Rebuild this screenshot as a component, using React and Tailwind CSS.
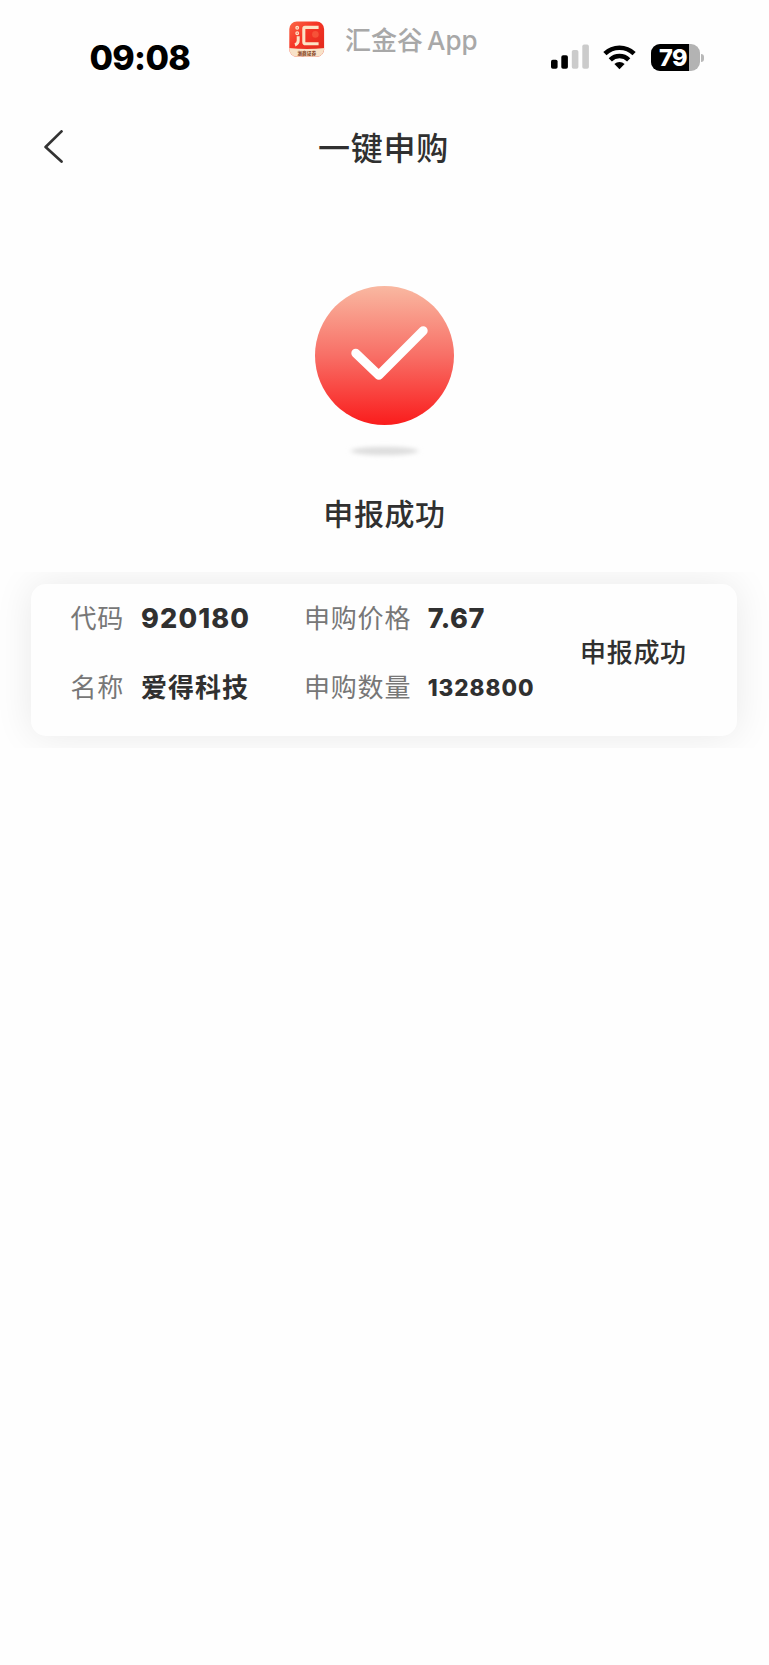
import React from 'react';

const AppLogo = () => (
    <svg className="w-9 h-9 shrink-0" viewBox="0 0 36 36">
        <defs>
            <linearGradient id="logoRed" x1="0" y1="0" x2="1" y2="1">
                <stop offset="0" stopColor="#fb6a48" />
                <stop offset="0.4" stopColor="#f63626" />
                <stop offset="1" stopColor="#dc261b" />
            </linearGradient>
            <clipPath id="logoClip">
                <rect x="0.3" y="0.6" width="34.8" height="35.2" rx="7.5" />
            </clipPath>
        </defs>
        <g clipPath="url(#logoClip)">
            <rect width="36" height="36" fill="url(#logoRed)" />
            <path d="M0 27 Q18 29 36 27 V36 H0 Z" fill="#f8e2c8" />
            <circle cx="26.4" cy="13.4" r="3.3" fill="#f65238" />
            <g fill="none" stroke="#fce3c6">
                <path d="M29.6 6.4 H16 Q14.8 6.4 14.8 7.8 V21 Q14.8 22.8 16.6 22.8 H29.6" strokeWidth="3.1" />
                <path d="M9.2 15.2 V19.6 Q9.2 22.8 6 24" strokeWidth="3" />
                <circle cx="8.2" cy="6.8" r="1.3" strokeWidth="1.3" />
                <circle cx="8.2" cy="12.2" r="1.3" strokeWidth="1.3" />
            </g>
            <text x="17.8" y="33.6" textAnchor="middle" fontSize="4.7" fontWeight="900" fill="#8a4a2c">浙商证券</text>
        </g>
    </svg>
);

const SignalIcon = () => (
    <svg className="w-[39px] h-[25px]" viewBox="0 0 39 25">
        <rect x="0" y="15.8" width="6.6" height="9" rx="1.8" fill="#000" />
        <rect x="10.3" y="11.2" width="6.6" height="13.6" rx="1.8" fill="#000" />
        <rect x="20.8" y="6" width="6.6" height="18.8" rx="1.8" fill="#cbcbcb" />
        <rect x="31.3" y="0.6" width="6.6" height="24.2" rx="1.8" fill="#cbcbcb" />
    </svg>
);

const WifiIcon = () => (
    <svg className="w-[33px] h-[26px]" viewBox="0 0 33 26">
        <g fill="none" stroke="#000" strokeWidth="4.6">
            <path d="M1.9 9.6 A21 21 0 0 1 31.1 9.6" />
            <path d="M7.3 15.8 A13.2 13.2 0 0 1 25.7 15.8" />
        </g>
        <path d="M16.5 25.2 L11.4 20 A7.6 7.6 0 0 1 21.6 20 Z" fill="#000" />
    </svg>
);

const Battery = () => (
    <div className="flex items-center">
        <div className="w-[49px] h-[27px] rounded-[9px] overflow-hidden bg-[#b3b3b3] flex">
            <div className="w-[38.5px] bg-black text-white text-[23.5px] font-extrabold leading-[27px] pl-[8.5px] tracking-[-0.6px]">79</div>
        </div>
        <div className="w-[3px] h-[8px] ml-px rounded-r-full bg-[#b8b8b8]"></div>
    </div>
);

const StatusBar = () => (
    <header className="h-[94px] flex">
        <div className="w-[289px] pl-[89.5px] pt-[37px] text-[34px] leading-[41px] font-extrabold tracking-[-0.7px] text-black">09:08</div>
        <div className="w-[262px] pt-[21px] flex items-start">
            <AppLogo />
            <div className="ml-[20px] mt-px flex text-[#a8a8a8] leading-[38px] font-medium whitespace-nowrap">
                <span className="text-[26px]">汇金谷</span>
                <span className="ml-[4px] text-[26px]">App</span>
            </div>
        </div>
        <div className="pt-[44px] flex items-start">
            <SignalIcon />
            <div className="ml-[13px]"><WifiIcon /></div>
            <div className="ml-[14.5px]"><Battery /></div>
        </div>
    </header>
);

const NavBar = () => (
    <div className="h-[106px] grid grid-cols-[1fr_auto_1fr] items-center">
        <svg className="w-5 h-[34px] ml-[43.5px]" viewBox="0 0 20 34" fill="none" stroke="#333" strokeWidth="2.7" strokeLinecap="round" strokeLinejoin="round">
            <path d="M17.5 1.4 L1.6 17 L17.5 31.5" />
        </svg>
        <h1 className="pt-1 -ml-0.5 text-[32px] leading-[48px] font-medium tracking-[0.8px]">一键申购</h1>
    </div>
);

const SuccessMark = () => (
    <svg className="w-[170px] h-[186px]" viewBox="0 0 170 186">
        <defs>
            <linearGradient id="circleFill" x1="0" y1="0" x2="0" y2="1">
                <stop offset="0" stopColor="#f9b8a1" />
                <stop offset="0.5" stopColor="#f86f66" />
                <stop offset="1" stopColor="#fa1c1c" />
            </linearGradient>
            <filter id="soften" x="-20%" y="-100%" width="140%" height="300%">
                <feGaussianBlur stdDeviation="2.4 1.9" />
            </filter>
        </defs>
        <circle cx="84.5" cy="75.5" r="69.5" fill="url(#circleFill)" />
        <path d="M55.8 73.2 L78.8 95.3 L123.2 50.8" fill="none" stroke="#fff" strokeWidth="9" strokeLinecap="round" strokeLinejoin="round" />
        <ellipse cx="84.5" cy="171" rx="34" ry="4.2" fill="#dedede" filter="url(#soften)" />
    </svg>
);

const Label = ({ children }) => (
    <span className="text-[26px] tracking-[0.8px] text-[#777]">{children}</span>
);

const ResultCard = () => (
    <section className="h-[176px] pl-[31px] pr-[32.5px] py-3 overflow-hidden">
        <div className="h-[152px] rounded-[15px] bg-[#fefefe] shadow-[0_0_38px_rgba(0,0,0,0.085)] flex whitespace-nowrap">
            <div className="w-[234px] pl-[39.5px] flex flex-col leading-[69px]">
                <div className="h-[69px] flex">
                    <Label>代码</Label>
                    <span className="ml-[17px] text-[27px] font-extrabold tracking-[1.1px]">920180</span>
                </div>
                <div className="h-[69px] flex">
                    <Label>名称</Label>
                    <span className="ml-[17px] text-[26px] font-bold tracking-[1px]">爱得科技</span>
                </div>
            </div>
            <div className="w-[315px] pl-[39px] flex flex-col leading-[69px]">
                <div className="h-[69px] flex">
                    <Label>申购价格</Label>
                    <span className="ml-[16.5px] text-[27px] font-extrabold tracking-[0.6px]">7.67</span>
                </div>
                <div className="h-[69px] flex">
                    <Label>申购数量</Label>
                    <span className="ml-[16.5px] text-[22.5px] leading-[70px] font-extrabold tracking-[0.95px]">1328800</span>
                </div>
            </div>
            <div className="h-[137px] flex items-center text-[26px] font-medium tracking-[0.7px]">申报成功</div>
        </div>
    </section>
);

const App = () => {
    return (
        <div className="min-h-[1665px] bg-[#fefefe] text-[#303030] font-['Inter','Noto_Sans_CJK_SC',sans-serif]">
            <StatusBar />
            <NavBar />
            <main>
                <div className="pt-20 h-[372px] flex flex-col items-center">
                    <SuccessMark />
                    <p className="mt-[26px] text-[30px] leading-[45px] font-medium tracking-[0.6px]">申报成功</p>
                </div>
                <ResultCard />
            </main>
        </div>
    );
};

export default App;
